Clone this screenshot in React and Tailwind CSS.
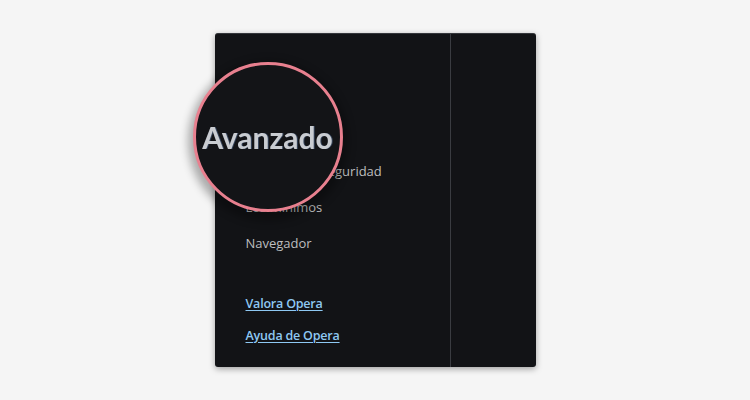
import React from "react";

const items = ["Privacidad y seguridad", "Los mínimos", "Navegador"];
const links = ["Valora Opera", "Ayuda de Opera"];

const Magnifier = () => {
  return (
    <div className="absolute left-[-22px] top-[28px] w-[150px] h-[150px] rounded-full border-[3px] border-[#e8808f] bg-[#131417] shadow-[0_4px_8px_5px_rgba(0,0,0,0.3)] flex items-center justify-center">
      <span className="font-['Lato',sans-serif] font-bold text-[30px] text-[#c9ccd1] blur-[0.3px] [text-shadow:1px_0_0_rgba(120,160,220,0.35)]">
        Avanzado
      </span>
    </div>
  );
};

const App = () => {
  return (
    <div className="w-[750px] h-[400px] bg-[#f5f5f5] flex items-center justify-center font-['Open_Sans',sans-serif]">
      <div className="relative w-[321px] h-[334px] bg-[#121316] border-t border-[#34363b] rounded-[3px] shadow-[0_2px_6px_rgba(0,0,0,0.35)] flex">
        <div className="w-[236px] border-r border-[#3a3c41] pl-[31px] pt-[120px]">
          {items.map((item) => (
            <div key={item} className="h-9 flex items-center text-[13px] text-[#bdbebf]">
              {item}
            </div>
          ))}
          <div className="mt-[26px]">
            {links.map((link) => (
              <div key={link} className="h-8 flex items-center">
                <a className="text-[12.5px] tracking-[-0.2px] font-semibold text-[#8ec8f2] underline underline-offset-2 cursor-pointer">
                  {link}
                </a>
              </div>
            ))}
          </div>
        </div>
        <div className="flex-1"></div>
        <Magnifier />
      </div>
    </div>
  );
};

export default App;
